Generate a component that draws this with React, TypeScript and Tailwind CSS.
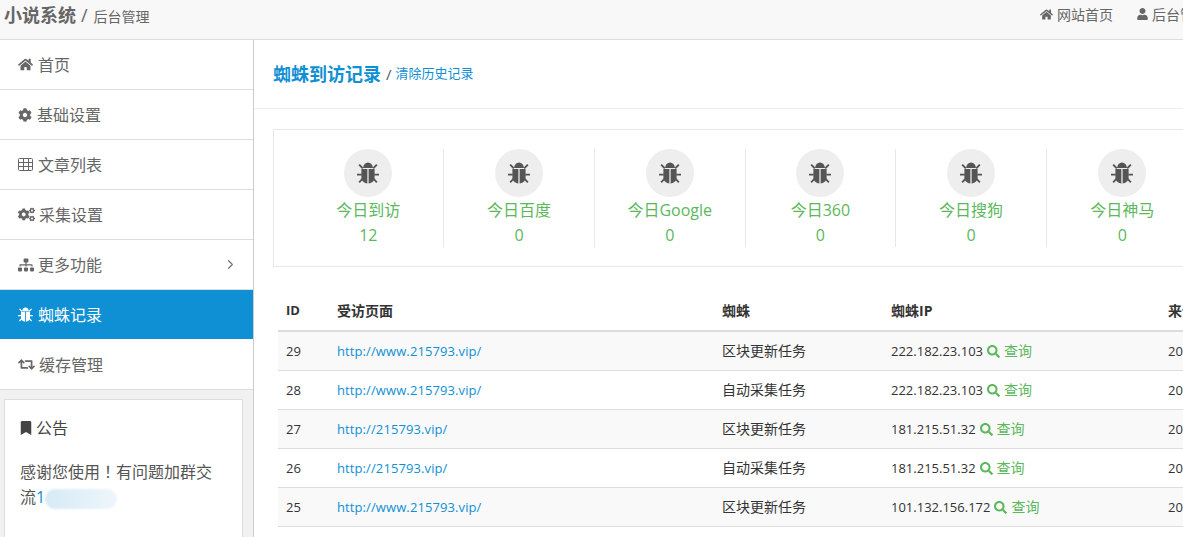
import { ChevronRight } from "lucide-react";
import { FaBookmark, FaCog, FaCogs, FaHome, FaRetweet, FaSearch, FaSitemap, FaUser } from "react-icons/fa";
import type { ReactNode } from "react";

// font-awesome 4 style bug, the packaged one has another shape
function BugIcon({ className }: { className?: string }) {
    return (
        <svg viewBox="0 0 24 24" className={className} fill="currentColor">
            <path d="M6.6 6.6C6.9 2.9 9 .6 12 .6s5.1 2.3 5.4 6z" />
            <path d="M4.8 7.6h6.5v15.8c-3.9-.4-6.5-2.8-6.5-6.4zM12.7 7.6h6.5V17c0 3.6-2.6 6-6.5 6.4z" />
            <path d="M1.6 3.6l1.5-1.4 4 4-1.5 1.5zM22.4 3.6l-1.5-1.4-4 4 1.5 1.5zM0 12.8h5.2v1.9H0zM18.8 12.8H24v1.9h-5.2zM5.4 17.4l1.4 1.5-3.7 4.1-1.5-1.4zM18.6 17.4l-1.4 1.5 3.7 4.1 1.5-1.4z" />
        </svg>
    );
}

// outlined grid, not the solid header version in the package
function TableIcon({ className }: { className?: string }) {
    return (
        <svg viewBox="0 0 15 13" className={className} fill="none" stroke="currentColor" strokeWidth="1">
            <rect x="0.5" y="0.5" width="14" height="12" rx="1" />
            <path d="M0.5 4.5h14M0.5 8.5h14M5.5 0.5v12M10.5 0.5v12" />
        </svg>
    );
}

const menu: { label: string; icon: ReactNode; gap: string; active?: boolean; more?: boolean }[] = [
    { label: "首页", icon: <FaHome className="w-[15px] h-[15px]" />, gap: "mr-[5px]" },
    { label: "基础设置", icon: <FaCog className="w-[14px] h-[14px]" />, gap: "mr-[5px]" },
    { label: "文章列表", icon: <TableIcon className="w-[15px] h-[13px]" />, gap: "mr-[5px]" },
    { label: "采集设置", icon: <FaCogs className="w-[17px] h-[17px]" />, gap: "mr-[4px]" },
    { label: "更多功能", icon: <FaSitemap className="w-[16px] h-[16px]" />, gap: "mr-[4px]", more: true },
    { label: "蜘蛛记录", icon: <BugIcon className="w-[15px] h-[15px]" />, gap: "mr-[5px]", active: true },
    { label: "缓存管理", icon: <FaRetweet className="w-[17px] h-[17px]" />, gap: "mr-[4px]" },
];

const stats = [
    { label: "今日到访", value: 12 },
    { label: "今日百度", value: 0 },
    { label: "今日Google", value: 0 },
    { label: "今日360", value: 0 },
    { label: "今日搜狗", value: 0 },
    { label: "今日神马", value: 0 },
];

const rows = [
    { id: 29, url: "http://www.215793.vip/", spider: "区块更新任务", ip: "222.182.23.103" },
    { id: 28, url: "http://www.215793.vip/", spider: "自动采集任务", ip: "222.182.23.103" },
    { id: 27, url: "http://215793.vip/", spider: "区块更新任务", ip: "181.215.51.32" },
    { id: 26, url: "http://215793.vip/", spider: "自动采集任务", ip: "181.215.51.32" },
    { id: 25, url: "http://www.215793.vip/", spider: "区块更新任务", ip: "101.132.156.172" },
];

export default function App() {
    return (
        <div className="h-screen overflow-hidden bg-white text-[#333] font-['Open_Sans','Noto_Sans_CJK_SC',sans-serif]">
            {/* Top bar */}
            <header className="h-10 flex items-start justify-between overflow-hidden bg-[#f8f8f8] border-b border-[#ddd] pl-1">
                <div className="flex items-baseline h-[30px] pt-[2px]">
                    <span className="text-[18px] leading-[26px] font-bold text-[#666]">小说系统</span>
                    <span className="text-[18px] leading-[26px] text-[#666] ml-[5px]">/</span>
                    <span className="text-[14px] leading-[26px] text-[#666] ml-[6px]">后台管理</span>
                </div>
                <div className="flex items-center h-[28px] text-[14px] text-[#666] shrink-0 w-[143px] overflow-hidden">
                    <FaHome className="w-[13px] h-[13px] shrink-0" />
                    <span className="ml-[4px] whitespace-nowrap">网站首页</span>
                    <FaUser className="w-[11px] h-[12px] shrink-0 ml-[24px]" />
                    <span className="ml-[4px] whitespace-nowrap">后台管理</span>
                </div>
            </header>

            <div className="flex h-[497px]">
                {/* Sidebar */}
                <aside className="w-[254px] shrink-0 bg-[#f1f1f1] border-r border-[#ccc]">
                    <nav>
                        {menu.map((item) => (
                            <div
                                key={item.label}
                                className={
                                    item.active
                                        ? "h-[50px] flex items-center pl-[18px] pr-[15px] bg-[#1090d4] text-white text-[16px] border-b border-white"
                                        : "h-[50px] flex items-center pl-[18px] pr-[15px] bg-white text-[#666] text-[16px] border-b border-[#ddd]"
                                }
                            >
                                <span className={item.gap}>{item.icon}</span>
                                <span className="flex-1">{item.label}</span>
                                {item.more && <ChevronRight className="w-[15px] h-[15px] text-[#777]" />}
                            </div>
                        ))}
                    </nav>
                    <div className="mt-[9px] ml-1 w-[239px] h-[200px] bg-white border border-[#ddd] px-[15px] pt-[17px]">
                        <div className="flex items-center text-[16px] leading-[22px] text-[#444]">
                            <FaBookmark className="w-[12px] h-[14px] mr-[4px]" />
                            公告
                        </div>
                        <p className="mt-[20px] text-[16px] leading-[25px] text-[#555]">
                            感谢您使用<span className="font-['Noto_Sans_CJK_TC']">！</span>有问题加群交流<a className="text-[#1090d4]">1</a>
                            <span className="inline-block align-middle w-[72px] h-[20px] rounded-full blur-[1px] bg-gradient-to-r from-[#d6eaf6] to-[#eef6fb]" />
                        </p>
                    </div>
                </aside>

                {/* Main content */}
                <main className="flex-1 min-w-0 overflow-hidden">
                    <div className="h-[69px] flex items-center pl-[19px] border-b border-[#eee]">
                        <h1 className="text-[18px] font-bold text-[#1090d4]">蜘蛛到访记录</h1>
                        <span className="text-[15px] text-[#555] ml-[5px]">/</span>
                        <a className="text-[13px] text-[#1090d4] ml-[4px]">清除历史记录</a>
                    </div>

                    <div className="ml-[19px] mt-5 w-[960px] h-[138px] border border-[#e7e7eb] pt-[19px] pl-[19.5px] flex items-start">
                        {stats.map((s, i) => (
                            <div
                                key={s.label}
                                className={
                                    i < 5
                                        ? "w-[150.7px] h-[98px] shrink-0 flex flex-col items-center border-r border-[#e7e7eb]"
                                        : "w-[150.7px] h-[98px] shrink-0 flex flex-col items-center"
                                }
                            >
                                <div className="w-12 h-12 rounded-full bg-[#eee] flex items-center justify-center text-[#555]">
                                    <BugIcon className="w-[22px] h-[22px]" />
                                </div>
                                <div className="mt-[1px] text-[16px] leading-[24px] text-[#5cb85c]">{s.label}</div>
                                <div className="mt-[1px] text-[16px] leading-[24px] text-[#5cb85c]">{s.value}</div>
                            </div>
                        ))}
                    </div>

                    <table className="ml-6 mt-[25px] w-[1000px] table-fixed border-collapse text-[14px]">
                        <colgroup>
                            <col className="w-[51px]" />
                            <col className="w-[385px]" />
                            <col className="w-[169px]" />
                            <col className="w-[277px]" />
                            <col />
                        </colgroup>
                        <thead>
                            <tr className="h-[39px] border-b-2 border-[#ddd] text-left">
                                <th className="px-2 pb-[2px] font-bold">
                                    <span className="text-[13px]">ID</span>
                                </th>
                                <th className="px-2 pb-[2px] font-bold">受访页面</th>
                                <th className="px-2 pb-[2px] font-bold">蜘蛛</th>
                                <th className="px-2 pb-[2px] font-bold">蜘蛛IP</th>
                                <th className="px-2 pb-[2px] font-bold">来访时间</th>
                            </tr>
                        </thead>
                        <tbody>
                            {rows.map((r, i) => (
                                <tr key={r.id} className={i % 2 === 0 ? "h-[39px] border-b border-[#ddd] bg-[#f9f9f9]" : "h-[39px] border-b border-[#ddd]"}>
                                    <td className="px-2">
                                        <span className="text-[13px]">{r.id}</span>
                                    </td>
                                    <td className="px-2">
                                        <a className="text-[13px] text-[#1090d4] tracking-[0.1px]">{r.url}</a>
                                    </td>
                                    <td className="px-2">{r.spider}</td>
                                    <td className="px-2">
                                        <span className="text-[13px]">{r.ip}</span>
                                        <a className="text-[#5cb85c] ml-[4px]">
                                            <FaSearch className="inline w-[13px] h-[13px] mr-[4px] align-[-2px]" />
                                            查询
                                        </a>
                                    </td>
                                    <td className="px-2 whitespace-nowrap">
                                        <span className="text-[13px]">2019-05-20</span>
                                    </td>
                                </tr>
                            ))}
                        </tbody>
                    </table>
                </main>
            </div>
        </div>
    );
}
